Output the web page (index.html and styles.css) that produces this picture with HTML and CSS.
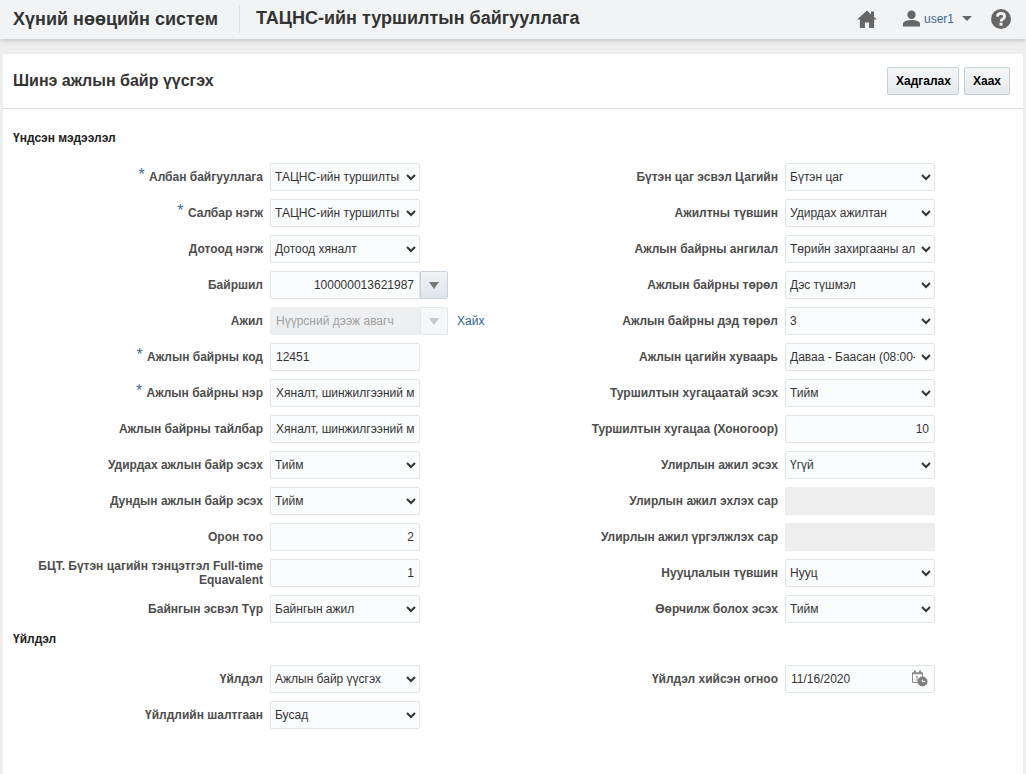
FILE: index.html
```html
<!DOCTYPE html>
<html lang="mn">
<head>
<meta charset="utf-8">
<title>Шинэ ажлын байр үүсгэх</title>
<link rel="stylesheet" href="styles.css">
</head>
<body>
<header class="topbar">
  <div class="app-name">Хүний нөөцийн систем</div>
  <div class="org-name">ТАЦНС-ийн туршилтын байгууллага</div>
  <div class="top-actions">
    <svg class="ico-home" width="20" height="18" viewBox="0 0 20 18"><path fill="#666" d="M10 .5 0 9.6h2.9V18h5v-5.6h4.2V18h5V9.6H20l-3-2.7V1.500h-3v2.700z"/></svg>
    <div class="user">
      <svg width="17" height="17" viewBox="0 0 18 18"><circle cx="9" cy="5" r="4.400" fill="#666"/><path fill="#666" d="M0 17.500v-3C0 11.800 5 10.600 9 10.600s9 1.200 9 3.900v3z"/></svg>
      <span class="user-name">user1</span>
      <span class="caret"></span>
    </div>
    <svg class="ico-help" width="20" height="20" viewBox="0 0 20 20"><circle cx="10" cy="10" r="10" fill="#666"/><path fill="none" stroke="#f1f3f5" stroke-width="2.800" d="M6.400 7.600C6.500 5.500 8 4.400 10 4.400c2.100 0 3.600 1.200 3.600 3 0 2.700-3.600 2.500-3.600 5.200"/><rect x="8.500" y="13.700" width="3" height="2.900" fill="#f1f3f5"/></svg>
  </div>
</header>

<main class="panel">
  <div class="panel-head">
    <h1 class="panel-title">Шинэ ажлын байр үүсгэх</h1>
    <div class="panel-btns">
      <button class="btn btn-save" type="button">Хадгалах</button>
      <button class="btn" type="button">Хаах</button>
    </div>
  </div>

  <h2 class="sec sec-first">Үндсэн мэдээлэл</h2>
  <div class="grid">
    <div class="col col-left">
      <div class="row"><label class="lab"><i>*</i> Албан байгууллага</label><select class="ctl"><option>ТАЦНС-ийн туршилтын байгууллага</option></select></div>
      <div class="row"><label class="lab"><i>*</i> Салбар нэгж</label><select class="ctl"><option>ТАЦНС-ийн туршилтын байгууллага</option></select></div>
      <div class="row"><label class="lab">Дотоод нэгж</label><select class="ctl"><option>Дотоод хяналт</option></select></div>
      <div class="row"><label class="lab">Байршил</label><input class="ctl num" value="100000013621987"><span class="drop"><span class="tri"></span></span></div>
      <div class="row"><label class="lab">Ажил</label><input class="ctl off" disabled value="Нүүрсний дээж авагч"><span class="drop drop-off"><span class="tri"></span></span><a class="find" href="#">Хайх</a></div>
      <div class="row"><label class="lab"><i>*</i> Ажлын байрны код</label><input class="ctl" value="12451"></div>
      <div class="row"><label class="lab"><i>*</i> Ажлын байрны нэр</label><input class="ctl" value="Хяналт, шинжилгээний мэргэжилтэн"></div>
      <div class="row"><label class="lab">Ажлын байрны тайлбар</label><input class="ctl" value="Хяналт, шинжилгээний мэргэжилтэн"></div>
      <div class="row"><label class="lab">Удирдах ажлын байр эсэх</label><select class="ctl"><option>Тийм</option></select></div>
      <div class="row"><label class="lab">Дундын ажлын байр эсэх</label><select class="ctl"><option>Тийм</option></select></div>
      <div class="row"><label class="lab">Орон тоо</label><input class="ctl num" value="2"></div>
      <div class="row"><label class="lab">БЦТ. Бүтэн цагийн тэнцэтгэл Full-time Equavalent</label><input class="ctl num" value="1"></div>
      <div class="row"><label class="lab">Байнгын эсвэл Түр</label><select class="ctl"><option>Байнгын ажил</option></select></div>
    </div>
    <div class="col col-right">
      <div class="row"><label class="lab">Бүтэн цаг эсвэл Цагийн</label><select class="ctl"><option>Бүтэн цаг</option></select></div>
      <div class="row"><label class="lab">Ажилтны түвшин</label><select class="ctl"><option>Удирдах ажилтан</option></select></div>
      <div class="row"><label class="lab">Ажлын байрны ангилал</label><select class="ctl"><option>Төрийн захиргааны алба</option></select></div>
      <div class="row"><label class="lab">Ажлын байрны төрөл</label><select class="ctl"><option>Дэс түшмэл</option></select></div>
      <div class="row"><label class="lab">Ажлын байрны дэд төрөл</label><select class="ctl"><option>3</option></select></div>
      <div class="row"><label class="lab">Ажлын цагийн хуваарь</label><select class="ctl"><option>Даваа - Баасан (08:00-17:00)</option></select></div>
      <div class="row"><label class="lab">Туршилтын хугацаатай эсэх</label><select class="ctl"><option>Тийм</option></select></div>
      <div class="row"><label class="lab">Туршилтын хугацаа (Хоногоор)</label><input class="ctl num" value="10"></div>
      <div class="row"><label class="lab">Улирлын ажил эсэх</label><select class="ctl"><option>Үгүй</option></select></div>
      <div class="row"><label class="lab">Улирлын ажил эхлэх сар</label><input class="ctl off off-plain" disabled></div>
      <div class="row"><label class="lab">Улирлын ажил үргэлжлэх сар</label><input class="ctl off off-plain" disabled></div>
      <div class="row"><label class="lab">Нууцлалын түвшин</label><select class="ctl"><option>Нууц</option></select></div>
      <div class="row"><label class="lab">Өөрчилж болох эсэх</label><select class="ctl"><option>Тийм</option></select></div>
    </div>
  </div>

  <h2 class="sec sec-second">Үйлдэл</h2>
  <div class="grid">
    <div class="col col-left">
      <div class="row"><label class="lab">Үйлдэл</label><select class="ctl"><option>Ажлын байр үүсгэх</option></select></div>
      <div class="row"><label class="lab">Үйлдлийн шалтгаан</label><select class="ctl"><option>Бусад</option></select></div>
    </div>
    <div class="col col-right">
      <div class="row"><label class="lab">Үйлдэл хийсэн огноо</label>
        <div class="date">
          <input class="ctl" value="11/16/2020">
          <svg class="date-ico" width="17" height="17" viewBox="0 0 17 17"><path fill="none" stroke="#8a8a8a" d="M1.500 3.500h10v9h-10z"/><path stroke="#8a8a8a" stroke-width="2" d="M1 3.200h11M4 .5v3M9 .5v3"/><path fill="none" stroke="#8a8a8a" d="M5 6.500l1-.6v5"/><circle cx="11.500" cy="11.500" r="5" fill="#808080"/><path fill="none" stroke="#fff" d="M11.300 9.500v2h3"/></svg>
        </div>
      </div>
    </div>
  </div>
</main>
</body>
</html>
```

FILE: styles.css
```css
* { box-sizing: border-box; }
html, body { margin: 0; height: 774px; overflow: hidden; }
body {
  background: #eeeeee;
  font-family: "Liberation Sans", Arial, sans-serif;
  font-size: 12px;
  color: #333;
}

.topbar {
  display: flex;
  align-items: center;
  height: 39px;
  padding: 0 15px 2px 13px;
  background: #f1f3f5;
  box-shadow: 0 1px 5px rgba(0, 0, 0, .22);
}
.app-name {
  font-size: 18px;
  font-weight: 700;
  color: #333;
  padding-right: 21px;
  border-right: 1px solid #dbe1e7;
  line-height: 28px;
}
.org-name {
  font-size: 18px;
  font-weight: 700;
  color: #333;
  margin-left: 16px;
}
.top-actions { display: flex; align-items: center; margin-left: auto; }
.ico-home { margin-right: 26px; }
.user { display: flex; align-items: center; margin-right: 19px; }
.user-name { color: #3f6b94; margin-left: 4px; font-size: 12px; }
.caret {
  width: 0;
  height: 0;
  margin-left: 8px;
  border-left: 5.500px solid transparent;
  border-right: 5.500px solid transparent;
  border-top: 5px solid #666;
}

.panel {
  margin: 15px 3px 0;
  height: 720px;
  background: #fff;
}
.panel-head {
  display: flex;
  align-items: center;
  justify-content: space-between;
  height: 55px;
  padding: 0 13px 0 10px;
  border-bottom: 1px solid #d6dfe6;
}
.panel-title { margin: 0; font-size: 16px; font-weight: 700; color: #333; }
.panel-btns { display: flex; gap: 5px; }
.btn {
  height: 28px;
  padding: 0 8px;
  font: 700 12px "Liberation Sans", Arial, sans-serif;
  color: #000;
  background: linear-gradient(#f4f6f8, #e6eaee);
  border: 1px solid #c4ced7;
  border-radius: 2px;
}
.btn-save { width: 72px; }
.btn:not(.btn-save) { width: 46px; }

.sec { margin: 0; padding-left: 10px; font-size: 12px; font-weight: 700; color: #222; line-height: 14px; }
.sec-first { padding-top: 22px; padding-bottom: 18px; }
.sec-second { padding-top: 1px; padding-bottom: 19px; }

.grid { display: grid; grid-template-columns: 510px 510px; }
.row { display: flex; align-items: center; height: 28px; margin-bottom: 8px; }
.col-left .lab { width: 260px; }
.col-right .lab { width: 265px; }
.lab {
  flex: none;
  margin-right: 7px;
  text-align: right;
  font-weight: 700;
  font-size: 12px;
  line-height: 14px;
  color: #4d4d4d;
}
.lab i { margin-right: 1px; color: #3f6b94; font-size: 16px; line-height: 10px; font-weight: 400; font-style: normal; vertical-align: 1px; }

.ctl {
  flex: none;
  width: 150px;
  height: 28px;
  padding: 0 3px 0 0;
  font: 12px "Liberation Sans", Arial, sans-serif;
  color: #333;
  background-color: #fbfcfe;
  border: 1px solid #dfe4ea;
  border-radius: 2px;
}
input.ctl { padding: 0 5px; }
.num { text-align: right; }
.off { background: #eeeff1; color: #a0a0a0; border-color: #eeeff1; }
.off-plain { background: #eeeeee; border-color: #eeeeee; }

.drop {
  flex: none;
  display: flex;
  align-items: center;
  justify-content: center;
  width: 28px;
  height: 28px;
  background: linear-gradient(#f1f3f5, #e0e5e9);
  border: 1px solid #c9d2da;
  border-radius: 0 2px 2px 0;
}
.tri {
  width: 0;
  height: 0;
  border-left: 5px solid transparent;
  border-right: 5px solid transparent;
  border-top: 7px solid #777;
}
.drop-off { background: #f6f7f8; border-color: #e4e7ea; }
.drop-off .tri { border-top-color: #c6c9cc; }
.find { margin-left: 9px; color: #2a6496; text-decoration: none; font-size: 12px; }

.date { position: relative; width: 150px; height: 28px; }
.date-ico { position: absolute; right: 7px; top: 5px; }
```
